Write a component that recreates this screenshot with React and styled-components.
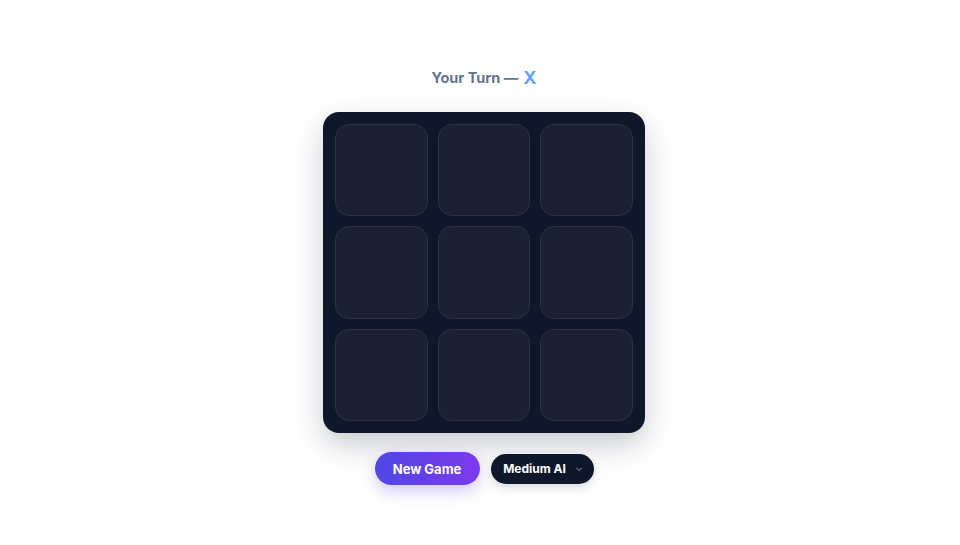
import React from "react";
import styled, { createGlobalStyle } from "styled-components";

const Global = createGlobalStyle`
  html, body { margin: 0; padding: 0; background: #ffffff; }
  body { font-family: Inter, "Noto Sans", sans-serif; }
`;

const Page = styled.div`
  width: 960px;
  height: 545px;
  display: flex;
  flex-direction: column;
  align-items: center;
  padding: 66px 0 0 8px;
  box-sizing: border-box;
`;

const Status = styled.div`
  font-size: 14.5px;
  font-weight: 700;
  color: #64748b;
  height: 22px;
  display: flex;
  align-items: center;
  gap: 5px;
  margin-bottom: 24px;
`;

const Mark = styled.span`
  color: #60a5fa;
  font-size: 18px;
  font-weight: 700;
`;

const Board = styled.div`
  width: 322px;
  height: 321px;
  box-sizing: border-box;
  padding: 12px;
  background: #0f172a;
  border-radius: 16px;
  display: grid;
  grid-template-columns: repeat(3, 1fr);
  grid-template-rows: repeat(3, 1fr);
  gap: 10px;
  box-shadow: 0 12px 30px rgba(15, 23, 42, 0.22);
`;

const Cell = styled.button`
  background: #1b2133;
  border: 1.5px solid #2a3243;
  border-radius: 14px;
  padding: 0;
  cursor: pointer;
`;

const Controls = styled.div`
  margin-top: 19px;
  display: flex;
  align-items: center;
  gap: 11px;
`;

const PrimaryButton = styled.button`
  height: 33px;
  width: 105px;
  border: none;
  border-radius: 17px;
  background: linear-gradient(90deg, #4f46e5, #7c3aed);
  color: #ffffff;
  font-family: Inter, sans-serif;
  font-size: 13px;
  font-weight: 700;
  box-shadow: 0 6px 16px rgba(99, 70, 230, 0.3);
  cursor: pointer;
`;

const Select = styled.button`
  height: 30px;
  width: 103px;
  border: none;
  border-radius: 15px;
  background: #0f172a;
  color: #ffffff;
  font-family: Inter, sans-serif;
  font-size: 12px;
  font-weight: 700;
  display: flex;
  align-items: center;
  justify-content: center;
  gap: 9px;
  padding: 0 0 0 2px;
  box-shadow: 0 4px 10px rgba(15, 23, 42, 0.15);
  cursor: pointer;
`;

const Chevron = () => (
  <svg width="8" height="8" viewBox="0 0 8 8" fill="none">
    <path d="M1.5 3 L4 5.5 L6.5 3" stroke="#94a3b8" strokeWidth="1" strokeLinecap="round" strokeLinejoin="round" />
  </svg>
);

export default function App() {
  return (
    <>
      <Global />
      <Page>
        <Status>
          Your Turn — <Mark>X</Mark>
        </Status>
        <Board>
          {Array.from({ length: 9 }).map((_, i) => (
            <Cell key={i} aria-label={`cell ${i + 1}`} />
          ))}
        </Board>
        <Controls>
          <PrimaryButton>New Game</PrimaryButton>
          <Select>
            Medium AI <Chevron />
          </Select>
        </Controls>
      </Page>
    </>
  );
}
